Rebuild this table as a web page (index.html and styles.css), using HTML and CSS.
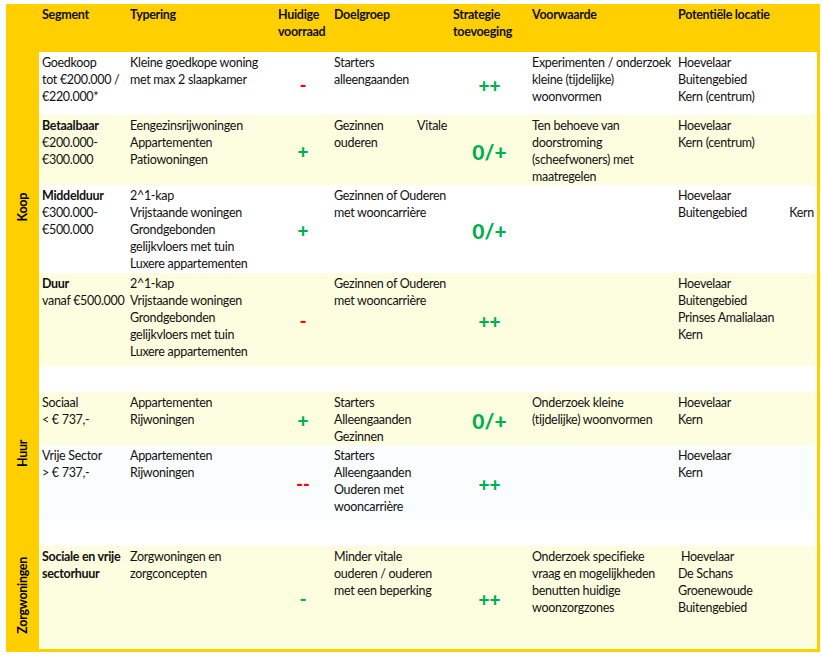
FILE: index.html
```html
<!DOCTYPE html>
<html lang="nl">
<head>
<meta charset="utf-8">
<title>Woningsegmenten</title>
<link rel="stylesheet" href="styles.css">
</head>
<body>
<div class="frame">
<table class="matrix">
  <colgroup>
    <col class="c-group"><col class="c-seg"><col class="c-typ"><col class="c-hv">
    <col class="c-dg"><col class="c-st"><col class="c-vw"><col class="c-loc">
  </colgroup>
  <thead>
    <tr class="r-head">
      <th></th>
      <th>Segment</th>
      <th>Typering</th>
      <th>Huidige<br>voorraad</th>
      <th>Doelgroep</th>
      <th>Strategie<br>toevoeging</th>
      <th>Voorwaarde</th>
      <th>Potentiële locatie</th>
    </tr>
  </thead>
  <tbody>
    <tr class="r1 bg-white">
      <td class="group" rowspan="4"><span class="vlabel">Koop</span></td>
      <td>Goedkoop<br>tot €200.000 /<br>€220.000*</td>
      <td>Kleine goedkope woning<br>met max 2 slaapkamer</td>
      <td class="sym"><span class="dash red">-</span></td>
      <td>Starters<br>alleengaanden</td>
      <td class="sym"><span class="pp">++</span></td>
      <td>Experimenten / onderzoek<br>kleine (tijdelijke)<br>woonvormen</td>
      <td>Hoevelaar<br>Buitengebied<br>Kern (centrum)</td>
    </tr>
    <tr class="r2 bg-cream">
      <td><b>Betaalbaar</b><br>€200.000-<br>€300.000</td>
      <td>Eengezinsrijwoningen<br>Appartementen<br>Patiowoningen</td>
      <td class="sym"><span class="pp">+</span></td>
      <td><span class="spread"><span>Gezinnen</span><span>Vitale</span></span>ouderen</td>
      <td class="sym"><span class="zp">0/+</span></td>
      <td>Ten behoeve van<br>doorstroming<br>(scheefwoners) met<br>maatregelen</td>
      <td>Hoevelaar<br>Kern (centrum)</td>
    </tr>
    <tr class="r3 bg-white">
      <td><b>Middelduur</b><br>€300.000-<br>€500.000</td>
      <td>2^1-kap<br>Vrijstaande woningen<br>Grondgebonden<br>gelijkvloers met tuin<br>Luxere appartementen</td>
      <td class="sym"><span class="pp">+</span></td>
      <td>Gezinnen of Ouderen<br>met wooncarrière</td>
      <td class="sym"><span class="zp">0/+</span></td>
      <td></td>
      <td>Hoevelaar<br><span class="spread"><span>Buitengebied</span><span>Kern</span></span></td>
    </tr>
    <tr class="r4 bg-cream">
      <td><b>Duur</b><br>vanaf €500.000</td>
      <td>2^1-kap<br>Vrijstaande woningen<br>Grondgebonden<br>gelijkvloers met tuin<br>Luxere appartementen</td>
      <td class="sym"><span class="dash red">-</span></td>
      <td>Gezinnen of Ouderen<br>met wooncarrière</td>
      <td class="sym"><span class="pp">++</span></td>
      <td></td>
      <td>Hoevelaar<br>Buitengebied<br>Prinses Amalialaan<br>Kern</td>
    </tr>
    <tr class="spacer bg-white">
      <td class="group" rowspan="4"><span class="vlabel">Huur</span></td>
      <td colspan="7"></td>
    </tr>
    <tr class="r5 bg-cream">
      <td>Sociaal<br>&lt; € 737,-</td>
      <td>Appartementen<br>Rijwoningen</td>
      <td class="sym"><span class="pp">+</span></td>
      <td>Starters<br>Alleengaanden<br>Gezinnen</td>
      <td class="sym"><span class="zp">0/+</span></td>
      <td>Onderzoek kleine<br>(tijdelijke) woonvormen</td>
      <td>Hoevelaar<br>Kern</td>
    </tr>
    <tr class="r6 bg-ice">
      <td>Vrije Sector<br>&gt; € 737,-</td>
      <td>Appartementen<br>Rijwoningen</td>
      <td class="sym"><span class="dash red">--</span></td>
      <td>Starters<br>Alleengaanden<br>Ouderen met<br>wooncarrière</td>
      <td class="sym"><span class="pp">++</span></td>
      <td></td>
      <td>Hoevelaar<br>Kern</td>
    </tr>
    <tr class="spacer bg-white">
      <td colspan="7"></td>
    </tr>
    <tr class="r7 bg-cream">
      <td class="group"><span class="vlabel">Zorgwoningen</span></td>
      <td><b>Sociale en vrije<br>sectorhuur</b></td>
      <td>Zorgwoningen en<br>zorgconcepten</td>
      <td class="sym"><span class="dash green">-</span></td>
      <td>Minder vitale<br>ouderen / ouderen<br>met een beperking</td>
      <td class="sym"><span class="pp">++</span></td>
      <td>Onderzoek specifieke<br>vraag en mogelijkheden<br>benutten huidige<br>woonzorgzones</td>
      <td><span class="indent">Hoevelaar</span><br>De Schans<br>Groenewoude<br>Buitengebied</td>
    </tr>
  </tbody>
</table>
</div>
</body>
</html>
```

FILE: styles.css
```css
html, body {
  background: #ffffff;
}

body {
  margin: 4px 0 0 6px;
  font-family: Lato, "Open Sans", "Liberation Sans", sans-serif;
  color: #111111;
}

.frame {
  width: 811px;
  background: #ffcf00;
  padding: 0 3px 3px 0;
}

.matrix {
  width: 811px;
  table-layout: fixed;
  border-collapse: collapse;
  border-spacing: 0;
  font-size: 12.5px;
  line-height: 17px;
  letter-spacing: -0.3px;
}

.c-group { width: 33px; }
.c-seg { width: 88px; }
.c-typ { width: 148px; }
.c-hv { width: 56px; }
.c-dg { width: 119px; }
.c-st { width: 79px; }
.c-vw { width: 146px; }
.c-loc { width: 142px; }

.matrix th,
.matrix td {
  padding: 2px 3px 0 3px;
  vertical-align: top;
  text-align: left;
  white-space: nowrap;
  box-sizing: border-box;
}

.matrix th {
  font-weight: 700;
  background: #ffcf00;
}

.r-head { height: 48px; }
.r1 { height: 63px; }
.r2 { height: 70px; }
.r3 { height: 88px; }
.r4 { height: 93px; }
.spacer { height: 26px; }
.r5 { height: 51px; }
.r6 { height: 75px; }
.r7 { height: 103px; }

.bg-white td { background: #ffffff; }
.bg-cream td { background: #fdfde0; }
.bg-ice td { background: #fafdfd; }

.matrix td.group {
  background: #ffcf00;
  padding: 0;
  vertical-align: middle;
  text-align: center;
}

.vlabel {
  display: inline-block;
  writing-mode: vertical-rl;
  transform: rotate(180deg);
  font-weight: 700;
  color: #000000;
}

.matrix td.sym {
  vertical-align: middle;
  text-align: center;
  padding: 6px 0 0 0;
  letter-spacing: 0;
}

.pp {
  color: #00b050;
  font-weight: 900;
  font-size: 19px;
  line-height: 17px;
}

.zp {
  color: #00b050;
  font-weight: 900;
  font-size: 21px;
  line-height: 20px;
}

.dash {
  font-weight: 900;
  font-size: 18px;
  line-height: 17px;
}

.red { color: #ff0000; }
.green { color: #00b050; }

.spread {
  display: flex;
  justify-content: space-between;
}

.indent {
  padding-left: 3px;
}
```
